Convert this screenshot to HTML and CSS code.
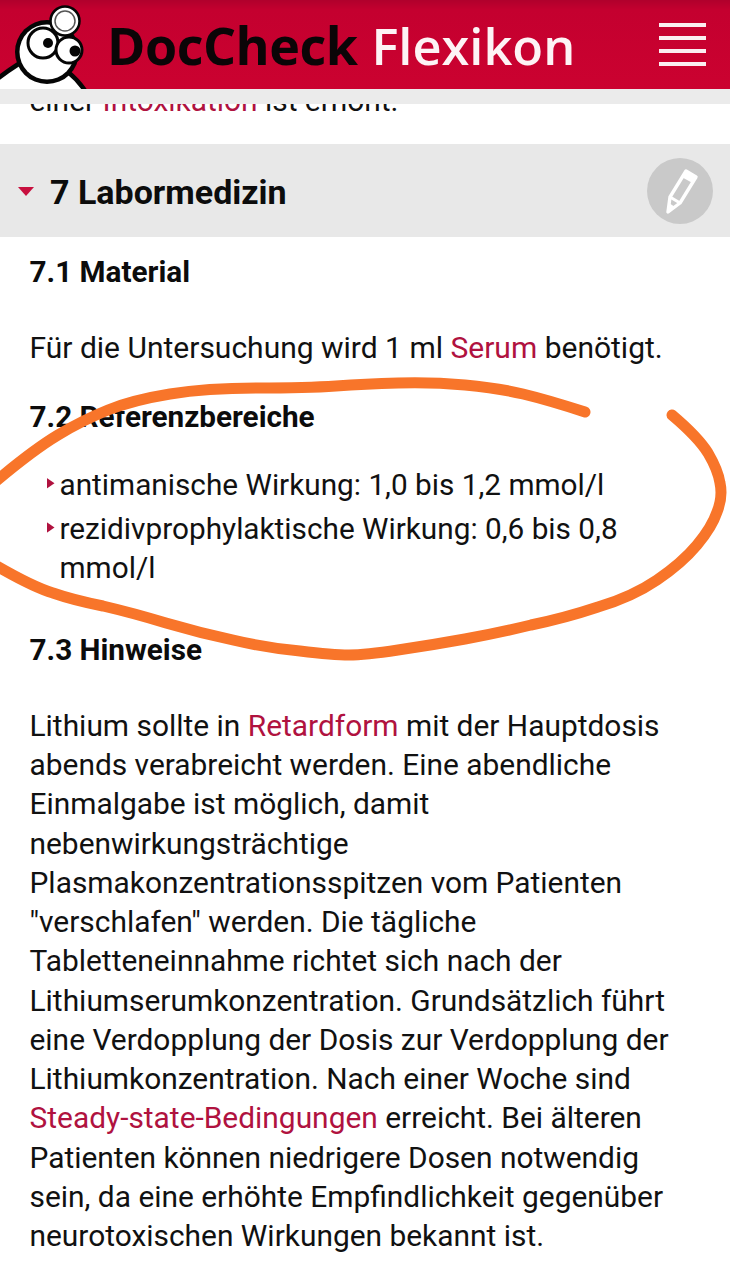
FILE: index.html
```html
<!DOCTYPE html>
<html lang="de">
<head>
<meta charset="utf-8">
<title>DocCheck Flexikon</title>
<link rel="stylesheet" href="styles.css">
</head>
<body>
<div class="page">
  <header class="topbar">
    <div class="brand-row">
      <svg class="mascot" viewBox="0 0 90 89" aria-hidden="true">
        <path d="M-4 92 L-4 80 Q6 72 20 63 L68 72 Q78 80 86 92 Z" fill="#fff" stroke="#050505" stroke-width="4.5"/>
        <circle cx="47" cy="52" r="32" fill="#050505"/>
        <circle cx="47" cy="52" r="27.5" fill="#fff"/>
        <circle cx="43" cy="43" r="15" fill="#fff" stroke="#050505" stroke-width="3"/>
        <circle cx="69" cy="50" r="13" fill="#fff" stroke="#050505" stroke-width="3"/>
        <circle cx="48" cy="43" r="5" fill="#050505"/>
        <circle cx="75" cy="51" r="5.5" fill="#050505"/>
        <circle cx="65" cy="21" r="14.5" fill="#fff" stroke="#050505" stroke-width="2.5"/>
        <circle cx="65" cy="21" r="10" fill="none" stroke="#555" stroke-width="1.5"/>
      </svg>
      <div class="wordmark"><span class="word-dark">DocCheck</span><span class="word-light">Flexikon</span></div>
      <div class="burger"><i></i><i></i><i></i><i></i></div>
    </div>
    <div class="strip"></div>
  </header>

  <div class="cutoff"><p class="cutoff-line">einer <a href="#">Intoxikation</a> ist erhöht.</p></div>

  <div class="section-bar">
    <span class="caret"></span>
    <h2 class="section-title">7 Labormedizin</h2>
    <span class="edit">
      <svg viewBox="0 0 66 66" aria-hidden="true">
        <path d="M39 13 L49 19 L33 45 L21 54 L23 39 Z" fill="none" stroke="#fff" stroke-width="3.4" stroke-linejoin="round"/>
        <path d="M39 13 L49 19 L45.5 25 L35.5 19.5 Z" fill="#fff"/>
        <path d="M23 39 L33 45" stroke="#fff" stroke-width="3"/>
        <path d="M21 54 L22 45 L28 49 Z" fill="#fff"/>
      </svg>
    </span>
  </div>

  <main class="content">
    <h3>7.1 Material</h3>
    <p class="short">Für die Untersuchung wird 1 ml <a href="#">Serum</a> benötigt.</p>
    <h3 class="h-ref">7.2 Referenzbereiche</h3>
    <ul>
      <li>antimanische Wirkung: 1,0 bis 1,2 mmol/l</li>
      <li>rezidivprophylaktische Wirkung: 0,6 bis 0,8 mmol/l</li>
    </ul>
    <h3 class="h-hint">7.3 Hinweise</h3>
    <p class="long">Lithium sollte in <a href="#">Retardform</a> mit der Hauptdosis abends verabreicht werden. Eine abendliche Einmalgabe ist möglich, damit nebenwirkungsträchtige Plasmakonzentrationsspitzen vom Patienten "verschlafen" werden. Die tägliche Tabletteneinnahme richtet sich nach der Lithiumserumkonzentration. Grundsätzlich führt eine Verdopplung der Dosis zur Verdopplung der Lithiumkonzentration. Nach einer Woche sind <a href="#">Steady-state-Bedingungen</a> erreicht. Bei älteren Patienten können niedrigere Dosen notwendig sein, da eine erhöhte Empfindlichkeit gegenüber neurotoxischen Wirkungen bekannt ist.</p>
  </main>

  <svg class="scribble" viewBox="0 0 730 1280" aria-hidden="true">
    <path d="M585 412 Q548 400 523 394 Q498 388 465 385 Q432 382 398 383 Q365 384 336 386 Q307 388 257 388 Q207 388 170 394 Q133 400 108 410 Q83 420 58 435 Q33 450 -5 482"/>
    <path d="M672 415 Q698 437 708 453 Q718 470 720 483 Q723 497 717 512 Q712 527 697 545 Q682 563 657 580 Q632 597 598 607 Q565 618 531 625 Q498 633 465 639 Q432 645 398 650 Q365 655 349 655 Q333 655 300 651 Q267 648 233 640 Q200 633 166 623 Q133 613 103 606 Q73 600 53 593 Q33 587 -5 565"/>
  </svg>
</div>
</body>
</html>
```
FILE: styles.css
```css
* { box-sizing: border-box; }
html, body { margin: 0; padding: 0; background: #fff; }
.page {
  position: relative;
  width: 730px;
  height: 1280px;
  overflow: hidden;
  font-family: Roboto, "Liberation Sans", sans-serif;
  font-size: 29.9px;
  line-height: 39.25px;
  color: #111;
}
a { color: #b0123f; text-decoration: none; }

.topbar { height: 104px; }
.brand-row {
  height: 89px;
  display: flex;
  align-items: center;
  overflow: hidden;
  background: linear-gradient(#b0002c 0, #c4002f 10px, #cb0230 100%);
}
.mascot { width: 90px; height: 89px; flex: none; }
.wordmark {
  margin-left: 17px;
  font-family: "Open Sans", "Liberation Sans", sans-serif;
  font-weight: 600;
  line-height: 89px;
  white-space: nowrap;
  display: flex;
  align-items: baseline;
  gap: 14px;
}
.word-dark { color: #0b0507; font-size: 52px; font-weight: 700; letter-spacing: -0.5px; }
.word-light { color: #fdf3f5; font-size: 50.5px; }
.burger {
  margin-left: auto;
  margin-right: 24px;
  width: 47px;
  display: flex;
  flex-direction: column;
  gap: 9px;
}
.burger i { display: block; height: 4px; background: #fbeef1; }
.strip { height: 15px; background: #ebebeb; }

.cutoff { height: 8px; overflow: hidden; padding-left: 29.5px; }
.cutoff-line { margin: -23px 0 0; }

.section-bar {
  margin-top: 32px;
  height: 93px;
  display: flex;
  align-items: center;
  background: #e8e8e8;
}
.caret {
  margin-left: 18px;
  margin-top: 2px;
  width: 0;
  height: 0;
  border-left: 8px solid transparent;
  border-right: 8px solid transparent;
  border-top: 9px solid #c8103f;
}
.section-title {
  margin: 4px 0 0 16px;
  font-size: 34px;
  font-weight: 700;
  color: #0c0c0c;
}
.edit {
  margin-left: auto;
  margin-right: 17px;
  width: 66px;
  height: 66px;
  border-radius: 50%;
  background: #c9c9c9;
}
.edit svg { display: block; width: 66px; height: 66px; }

.content { padding: 15px 30px 0 29.5px; }
h3 {
  margin: 0;
  font-size: 29.7px;
  font-weight: 700;
  color: #0c0c0c;
}
p { margin: 0; }
.short { margin-top: 37px; font-size: 30px; }
.h-ref { margin-top: 29px; }
ul { margin: 29px 0 0; padding: 0; list-style: none; font-size: 29.75px; }
li {
  display: flex;
  align-items: flex-start;
  padding-left: 17px;
  margin-bottom: 5px;
}
li::before {
  content: "";
  flex: none;
  width: 8px;
  height: 11px;
  margin: 13px 5px 0 0;
  background: #b0123f;
  clip-path: polygon(0 0, 100% 50%, 0 100%);
}
.h-hint { margin-top: 42px; }
.long { margin-top: 37px; }

.scribble {
  position: absolute;
  left: 0;
  top: 0;
  width: 730px;
  height: 1280px;
  pointer-events: none;
}
.scribble path {
  fill: none;
  stroke: #f8752a;
  stroke-width: 11;
  stroke-linecap: round;
  stroke-linejoin: round;
}
```
